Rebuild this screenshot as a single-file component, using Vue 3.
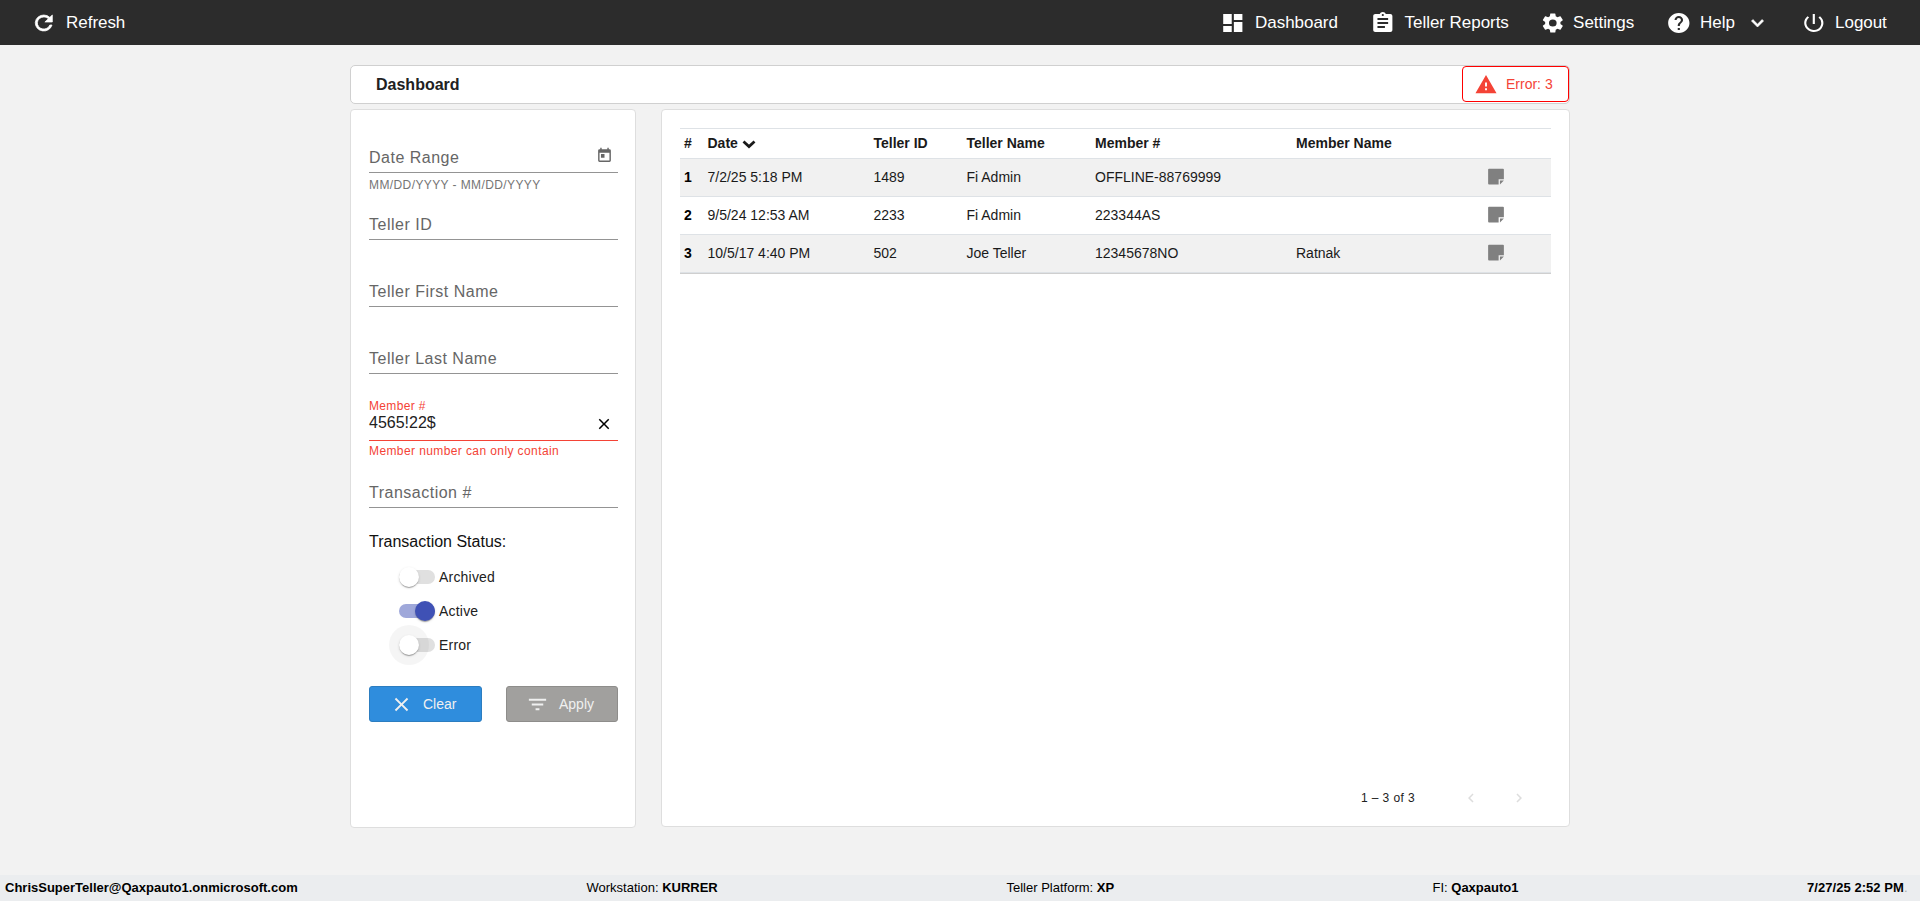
<script setup>
const icons = {
  refresh: 'M17.65 6.35A7.96 7.96 0 0 0 12 4a8 8 0 1 0 7.73 10h-2.08A6 6 0 1 1 12 6c1.66 0 3.14.69 4.22 1.78L13 11h7V4z',
  dashboard: 'M3 13h8V3H3zm0 8h8v-6H3zm10 0h8V11h-8zm0-18v6h8V3z',
  reports: 'M19 3h-4.18C14.4 1.84 13.3 1 12 1s-2.4.84-2.82 2H5c-1.1 0-2 .9-2 2v14c0 1.1.9 2 2 2h14c1.1 0 2-.9 2-2V5c0-1.1-.9-2-2-2m-7 0c.55 0 1 .45 1 1s-.45 1-1 1-1-.45-1-1 .45-1 1-1m2 14H7v-2h7zm3-4H7v-2h10zm0-4H7V7h10z',
  settings: 'M19.14 12.94c.04-.3.06-.61.06-.94 0-.32-.02-.64-.07-.94l2.03-1.58a.49.49 0 0 0 .12-.61l-1.92-3.32a.49.49 0 0 0-.59-.22l-2.39.96c-.5-.38-1.03-.7-1.62-.94l-.36-2.54a.48.48 0 0 0-.48-.41h-3.84c-.24 0-.43.17-.47.41l-.36 2.54c-.59.24-1.13.57-1.62.94l-2.39-.96c-.22-.08-.47 0-.59.22L2.74 8.87c-.12.21-.08.47.12.61l2.03 1.58c-.05.3-.09.63-.09.94s.02.64.07.94l-2.03 1.58a.49.49 0 0 0-.12.61l1.92 3.32c.12.22.37.29.59.22l2.39-.96c.5.38 1.03.7 1.62.94l.36 2.54c.05.24.24.41.48.41h3.84c.24 0 .44-.17.47-.41l.36-2.54c.59-.24 1.13-.56 1.62-.94l2.39.96c.22.08.47 0 .59-.22l1.92-3.32c.12-.22.07-.47-.12-.61zM12 15.6A3.6 3.6 0 1 1 12 8.4a3.6 3.6 0 0 1 0 7.2',
  help: 'M12 2C6.48 2 2 6.48 2 12s4.48 10 10 10 10-4.48 10-10S17.52 2 12 2m1 17h-2v-2h2zm2.07-7.75-.9.92C13.45 12.9 13 13.5 13 15h-2v-.5c0-1.1.45-2.1 1.17-2.83l1.24-1.26c.37-.36.59-.86.59-1.41 0-1.1-.9-2-2-2s-2 .9-2 2H8c0-2.21 1.79-4 4-4s4 1.79 4 4c0 .88-.36 1.68-.93 2.25',
  logout: 'M13 3h-2v10h2zm4.83 2.17-1.42 1.42A6.92 6.92 0 0 1 19 12a7 7 0 1 1-11.42-5.42L6.17 5.17A8.93 8.93 0 0 0 3 12a9 9 0 1 0 14.83-6.83',
  down: 'M7.41 8.59 12 13.17l4.59-4.58L18 10l-6 6-6-6z',
  left: 'M15.41 7.41 14 6l-6 6 6 6 1.41-1.41L10.83 12z',
  right: 'M10 6 8.59 7.41 13.17 12l-4.58 4.59L10 18l6-6z',
  close: 'M19 6.41 17.59 5 12 10.59 6.41 5 5 6.41 10.59 12 5 17.59 6.41 19 12 13.41 17.59 19 19 17.59 13.41 12z',
  filter: 'M10 18h4v-2h-4zM3 6v2h18V6zm3 7h12v-2H6z',
  warning: 'M1 21h22L12 2zm12-3h-2v-2h2zm0-4h-2v-4h2z',
  today: 'M19 3h-1V1h-2v2H8V1H6v2H5a2 2 0 0 0-2 2v14a2 2 0 0 0 2 2h14a2 2 0 0 0 2-2V5a2 2 0 0 0-2-2m0 16H5V8h14zM7 10h5v5H7z',
  note: 'M3 4C3 3.400 3.400 3 4 3h16c.6 0 1 .4 1 1v11h-6v6H4c-.6 0-1-.4-1-1zM16.500 21v-4.500H21z',
}
const nav = [
  { id: 'dashboard', label: 'Dashboard' },
  { id: 'reports', label: 'Teller Reports' },
  { id: 'settings', label: 'Settings' },
  { id: 'help', label: 'Help', menu: true },
  { id: 'logout', label: 'Logout' },
]
const fields = [
  { label: 'Date Range', hint: 'MM/DD/YYYY - MM/DD/YYYY', icon: 'today' },
  { label: 'Teller ID' },
  { label: 'Teller First Name' },
  { label: 'Teller Last Name' },
  { label: 'Member #', value: '4565!22$', hint: 'Member number can only contain', icon: 'close', error: true },
  { label: 'Transaction #' },
]
const toggles = [
  { label: 'Archived' },
  { label: 'Active', on: true },
  { label: 'Error', focus: true },
]
const rows = [
  ['7/2/25 5:18 PM', '1489', 'Fi Admin', 'OFFLINE-88769999', ''],
  ['9/5/24 12:53 AM', '2233', 'Fi Admin', '223344AS', ''],
  ['10/5/17 4:40 PM', '502', 'Joe Teller', '12345678NO', 'Ratnak'],
]
</script>

<template>
  <div class="page">
    <header class="topbar">
      <a class="nav-item">
        <svg viewBox="0 0 24 24" preserveAspectRatio="none"><path :d="icons.refresh" class="heavy" /></svg>
        <span>Refresh</span>
      </a>
      <nav>
        <a v-for="n in nav" :key="n.id" class="nav-item" :class="n.id">
          <svg viewBox="0 0 24 24" preserveAspectRatio="none"><path :d="icons[n.id]" fill-rule="evenodd" /></svg>
          <span>{{ n.label }}</span>
          <svg v-if="n.menu" class="caret" viewBox="0 0 24 24"><path :d="icons.down" class="heavy" /></svg>
        </a>
      </nav>
    </header>

    <main>
      <section class="titlebar">
        <h1>Dashboard</h1>
        <button class="error-btn">
          <svg viewBox="0 0 24 24"><path :d="icons.warning" /></svg>
          <span>Error: 3</span>
        </button>
      </section>

      <div class="columns">
        <aside class="card filters">
          <div v-for="f in fields" :key="f.label" class="field" :class="{ error: f.error }">
            <div class="control">
              <div class="texts">
                <label>{{ f.label }}</label>
                <span v-if="f.value" class="value">{{ f.value }}</span>
              </div>
              <svg v-if="f.icon" :class="f.icon" viewBox="0 0 24 24"><path :d="icons[f.icon]" fill-rule="evenodd" /></svg>
            </div>
            <div v-if="f.hint" class="hint">{{ f.hint }}</div>
          </div>

          <div class="status-title">Transaction Status:</div>
          <div v-for="t in toggles" :key="t.label" class="toggle" :class="{ on: t.on, focus: t.focus }">
            <span class="track"><span class="thumb"></span></span>
            <span>{{ t.label }}</span>
          </div>

          <div class="actions">
            <button class="clear"><svg viewBox="0 0 24 24"><path :d="icons.close" /></svg><span>Clear</span></button>
            <button class="apply"><svg viewBox="0 0 24 24"><path :d="icons.filter" /></svg><span>Apply</span></button>
          </div>
        </aside>

        <section class="card results">
          <div class="table">
            <div class="row head">
              <span>#</span>
              <span class="sorted">Date
                <svg viewBox="0 0 14 10"><path d="M1.500 2.500 7 7.500l5.500-5" /></svg>
              </span>
              <span>Teller ID</span><span>Teller Name</span><span>Member #</span><span>Member Name</span><span></span>
            </div>
            <div v-for="(r, i) in rows" :key="i" class="row">
              <b>{{ i + 1 }}</b>
              <span v-for="(c, j) in r" :key="j">{{ c }}</span>
              <svg class="note" viewBox="0 0 24 24"><path :d="icons.note" /></svg>
            </div>
          </div>
          <div class="pager">
            <span>1 – 3 of 3</span>
            <svg viewBox="0 0 24 24"><path :d="icons.left" /></svg>
            <svg viewBox="0 0 24 24"><path :d="icons.right" /></svg>
          </div>
        </section>
      </div>
    </main>

    <footer>
      <b class="user">ChrisSuperTeller@Qaxpauto1.onmicrosoft.com</b>
      <span>Workstation: <b>KURRER</b></span>
      <span>Teller Platform: <b>XP</b></span>
      <span>FI: <b>Qaxpauto1</b></span>
      <span class="time"><b>7/27/25 2:52 PM</b>.</span>
    </footer>
  </div>
</template>

<style>
html, body { background: #f2f2f2; overflow: hidden; }
</style>

<style scoped>
.page, .page * { box-sizing: border-box; }
.page {
  width: 1920px; height: 901px; display: flex; flex-direction: column;
  background: #f2f2f2; color: #212121;
  font-family: "Liberation Sans", Arial, sans-serif; font-size: 14px;
}
svg { display: block; flex: none; fill: currentColor; }
button { font: inherit; margin: 0; padding: 0; cursor: pointer; }
.heavy { stroke: currentColor; stroke-width: 0.7; }

.topbar {
  height: 45px; flex: none; background: #2c2c2c; color: #fff;
  display: flex; justify-content: space-between; padding: 0 0 0 31px;
}
.topbar nav { display: grid; grid-template-columns: 149.5px 170.5px 125.5px 135px 119.5px; }
.nav-item { display: flex; align-items: center; font-size: 17px; letter-spacing: -0.05px; white-space: nowrap; }
.nav-item svg { width: 25.6px; height: 24px; margin-right: 9.5px; }
.nav-item.settings svg { margin-right: 7.5px; }
.nav-item.help svg, .nav-item.logout svg { margin-right: 9px; }
.nav-item .caret.caret { width: 25px; height: 24px; margin: 0 0 0 10px; }
.nav-item span { line-height: 20px; }

main { width: 1220px; margin: 20px 0 0 350px; flex: 1; }
.titlebar {
  height: 39px; display: flex; align-items: center; justify-content: space-between;
  background: #fff; border: 1px solid #d0d0d0; border-radius: 5px; padding-left: 25px;
}
.titlebar h1 { margin: 0; font-size: 16px; line-height: 20px; }
.error-btn {
  width: 107px; height: 36px; display: flex; align-items: center; gap: 8px; padding-left: 11px;
  background: #fff; border: 1px solid #f00; border-radius: 4px; color: #f44336; margin-top: -1px;
}
.error-btn svg { width: 24px; height: 23px; }

.columns { display: flex; align-items: flex-start; gap: 25px; margin-top: 5px; }
.card { background: #fff; border: 1px solid #dedede; border-radius: 4px; }
.filters { width: 286px; height: 719px; padding: 18px 17px 0 18px; }
.field { height: 67px; }
.control {
  height: 45px; display: flex; justify-content: space-between; align-items: flex-end;
  border-bottom: 1px solid #949494; color: #666;
}
.texts { display: flex; flex-direction: column; padding-bottom: 4px; }
label { font-size: 16px; line-height: 20px; letter-spacing: 0.5px; }
.hint { font-size: 12px; line-height: 14px; letter-spacing: 0.4px; padding-top: 5px; color: #757575; white-space: nowrap; }
.today { width: 17px; height: 17px; margin: 0 5px 8px 0; color: #666; }
.close { width: 18px; height: 18px; margin: 0 5px 7px 0; color: #000; }
.error .control { border-color: #f44336; }
.error label { font-size: 12px; line-height: 14px; letter-spacing: 0.35px; margin-bottom: 1px; }
.error label, .error .hint { color: #f44336; }
.error .texts { padding-bottom: 8px; }
.error .hint { padding-top: 3px; }
.value { font-size: 16px; line-height: 18px; color: #212121; }

.status-title { font-size: 16px; line-height: 20px; margin-top: 2px; margin-bottom: 8px; color: #111; }
.toggle { height: 34px; display: flex; align-items: center; padding-left: 30px; gap: 4px; letter-spacing: 0.2px; }
.track { position: relative; width: 36px; height: 14px; border-radius: 7px; background: #e0e0e0; }
.thumb {
  position: absolute; left: 0; top: -3px; width: 20px; height: 20px; border-radius: 50%; background: #fff;
  box-shadow: 0 2px 1px -1px rgba(0,0,0,.2), 0 1px 1px rgba(0,0,0,.14), 0 1px 3px rgba(0,0,0,.12);
}
.on .track { background: #9fa8da; }
.on .thumb { left: 16px; background: #3f51b5; }
.focus .track::before {
  content: ""; position: absolute; left: -10px; top: -13px; width: 40px; height: 40px;
  border-radius: 50%; background: rgba(0,0,0,.04);
}

.actions { display: flex; justify-content: space-between; margin-top: 24px; }
.actions button { height: 36px; display: flex; align-items: center; border: 1px solid #2c7dc0; border-radius: 3px; color: #f0f0f0; }
.actions .clear { width: 113px; background: #2f8ddd; padding-left: 20px; gap: 10px; }
.actions .apply { width: 112px; background: #a1a09e; border-color: #8e8d8b; padding-left: 19px; gap: 10px; }
.actions svg { width: 23px; height: 23px; }

.results { flex: 1; height: 718px; display: flex; flex-direction: column; justify-content: space-between; padding: 18px 18px 16px; }
.table { border-top: 1px solid #dee2e6; border-bottom: 1px solid #cfcfcf; }
.row {
  height: 38px; display: grid; grid-template-columns: 23.5px 166px 93px 128.5px 201px 189px 1fr;
  align-items: center; padding: 0 0 2px 4px; border-bottom: 1px solid #dee2e6; color: #1a1a1a;
}
.row:nth-child(even) { background: #f1f1f1; }
.row.head { height: 30px; font-weight: bold; }
.row b { color: #000; }
.sorted { display: flex; align-items: center; gap: 4px; }
.sorted svg { width: 14px; height: 10px; fill: none; stroke: currentColor; stroke-width: 2.8; margin-top: 2px; }
.note { width: 22px; height: 21px; color: #808080; }

.pager { display: flex; align-items: center; justify-content: flex-end; height: 24px; padding-right: 23px; font-size: 12px; letter-spacing: 0.4px; }
.pager svg { width: 18px; height: 18px; color: #ddd; margin-left: 30px; }
.pager span { margin-right: 17px; }

footer {
  height: 26px; flex: none; display: grid; align-items: center;
  grid-template-columns: 581.5px 420px 426px 374.5px 1fr; padding: 0 0 2px 5px;
  background: #ebedef; color: #000; font-size: 13px; white-space: nowrap;
}
.time { color: #aaa; letter-spacing: 0.05px; }
.time b { color: #000; }
</style>
